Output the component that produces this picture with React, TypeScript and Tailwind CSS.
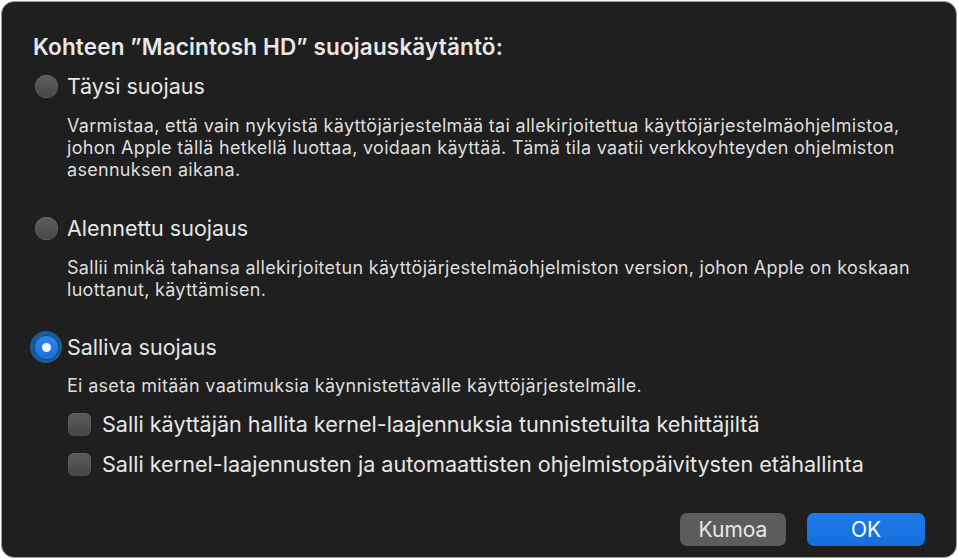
import React from 'react'

const font = { fontFamily: 'Inter, "Noto Sans", "Liberation Sans", sans-serif' }

const Radio = ({ checked }: { checked?: boolean }) =>
  checked ? (
    <span className="-m-[5px] flex h-[32px] w-[32px] shrink-0 items-center justify-center rounded-full bg-[#1d5c93]">
      <span className="flex h-[23px] w-[23px] items-center justify-center rounded-full bg-gradient-to-b from-[#2c87ee] to-[#1b70d9] shadow-[0_0_0_1px_rgba(20,60,110,0.6)]">
        <span className="h-[9px] w-[9px] rounded-full bg-[#f4f6ff]" />
      </span>
    </span>
  ) : (
    <span className="h-[23px] w-[23px] shrink-0 rounded-full bg-gradient-to-b from-[#5e5e5e] to-[#474747] shadow-[inset_0_0_0_0.5px_rgba(255,255,255,0.15)]" />
  )

const Checkbox = () => (
  <span className="h-[23px] w-[23px] shrink-0 rounded-[6px] bg-gradient-to-b from-[#5b5b5b] to-[#464646] shadow-[inset_0_0_0_0.5px_rgba(255,255,255,0.12)]" />
)

type Option = {
  label: string
  checked?: boolean
  desc: string[]
}

const options: Option[] = [
  {
    label: 'Täysi suojaus',
    desc: [
      'Varmistaa, että vain nykyistä käyttöjärjestelmää tai allekirjoitettua käyttöjärjestelmäohjelmistoa,',
      'johon Apple tällä hetkellä luottaa, voidaan käyttää. Tämä tila vaatii verkkoyhteyden ohjelmiston',
      'asennuksen aikana.',
    ],
  },
  {
    label: 'Alennettu suojaus',
    desc: [
      'Sallii minkä tahansa allekirjoitetun käyttöjärjestelmäohjelmiston version, johon Apple on koskaan',
      'luottanut, käyttämisen.',
    ],
  },
  {
    label: 'Salliva suojaus',
    checked: true,
    desc: ['Ei aseta mitään vaatimuksia käynnistettävälle käyttöjärjestelmälle.'],
  },
]

export default function App() {
  return (
    <div className="h-[559px] w-[958px] bg-white p-[1px]" style={font}>
      <div className="flex h-full w-full flex-col rounded-[13px] border border-[#9a9a9a] bg-[#1f1f1f] pl-[31px] pr-[30px] text-[#e6e6e6]">
        <h1 className="mt-[33px] text-[22.5px] font-semibold leading-[24px] tracking-[0.15px] text-[#e8e8e8]">
          Kohteen ”Macintosh HD” suojauskäytäntö:
        </h1>

        {options.map((opt, i) => (
          <div key={opt.label} className={i === 0 ? 'mt-[15px]' : i === 1 ? 'mt-[35px]' : 'mt-[34px]'}>
            <div className="flex h-[24px] items-center">
              <div className="flex w-[34px] justify-start pl-[2px]">
                <Radio checked={opt.checked} />
              </div>
              <span className="text-[21.5px] leading-[24px] text-[#e6e6e6]">{opt.label}</span>
            </div>
            <div
              className={`${i === 2 ? 'mt-[16px]' : 'mt-[17px]'} pl-[34px] text-[18px] leading-[22px] tracking-[0.3px] text-[#dedede]`}
            >
              {opt.desc.map((line) => (
                <div key={line}>{line}</div>
              ))}
            </div>
          </div>
        ))}

        <div className="mt-[16px] flex flex-col gap-[17px] pl-[35px]">
          {[
            'Salli käyttäjän hallita kernel-laajennuksia tunnistetuilta kehittäjiltä',
            'Salli kernel-laajennusten ja automaattisten ohjelmistopäivitysten etähallinta',
          ].map((t) => (
            <div key={t} className="flex h-[23px] items-center gap-[11px]">
              <Checkbox />
              <span className="text-[21.6px] leading-[23px] text-[#e6e6e6]">{t}</span>
            </div>
          ))}
        </div>

        <div className="mt-auto mb-[11px] flex justify-end gap-[21px] pr-[1px]">
          <button className="h-[33px] w-[106px] rounded-[7px] bg-[#5c5c5c] text-[21px] leading-[33px] text-[#e8e8e8]">
            Kumoa
          </button>
          <button className="h-[33px] w-[118px] rounded-[7px] bg-gradient-to-b from-[#1f7ae8] to-[#146fdc] text-[21px] leading-[33px] text-white">
            OK
          </button>
        </div>
      </div>
    </div>
  )
}
